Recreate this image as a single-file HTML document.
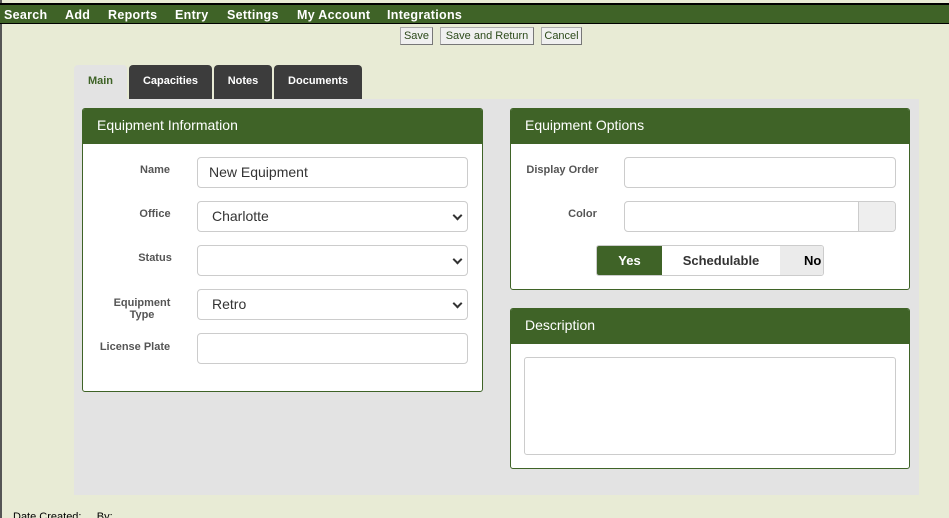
<!DOCTYPE html>
<html><head><style>
*{box-sizing:border-box}
html,body{margin:0;width:949px;height:518px;overflow:hidden}
body{background:#e8ebd5;font-family:"Liberation Sans",Arial,sans-serif;position:relative}
.a{position:absolute}
.nav{left:0;top:3px;width:949px;height:21px;background:#3f6327;border-top:2px solid #000;border-bottom:1px solid #000}
.nav span{position:absolute;top:3px;color:#fff;font-weight:bold;font-size:12.5px;font-family:"Liberation Sans",Arial,sans-serif;letter-spacing:0.3px}
.btn{top:27px;height:18px;background:#f0f0f0;border:1px solid #aaa;border-right-color:#777;border-bottom-color:#777;font-size:11px;color:#2c4a1a;text-align:center;line-height:16px}
.tab{top:65px;height:34px;background:#3c3c3c;color:#fff;font-weight:bold;font-size:11px;text-align:center;line-height:33px;border-radius:4px 4px 0 0}
.card{background:#fff;border:1px solid #3f6327;border-radius:3px;overflow:hidden}
.hd{height:35px;background:#3f6327;color:#fff;font-size:14px;line-height:33px;padding-left:14px}
.lbl{font-size:11px;font-weight:bold;color:#555;text-align:center;line-height:12px}
.inp{height:31px;border:1px solid #ccc;border-radius:4px;background:#fff;font-size:14px;color:#333;padding-left:11px;line-height:29px}
.sel:after{content:"";position:absolute;right:6px;top:10px;width:5px;height:5px;border-right:2px solid #333;border-bottom:2px solid #333;transform:rotate(45deg)}
</style></head><body>
<div class="a" style="left:0;top:0;width:2px;height:518px;background:#555"></div>
<div class="a nav">
<span style="left:4px">Search</span><span style="left:65px">Add</span><span style="left:108px">Reports</span><span style="left:175px">Entry</span><span style="left:227px">Settings</span><span style="left:297px">My Account</span><span style="left:387px">Integrations</span>
</div>
<div class="a btn" style="left:400px;width:33px">Save</div>
<div class="a btn" style="left:440px;width:94px">Save and Return</div>
<div class="a btn" style="left:541px;width:41px">Cancel</div>
<div class="a" style="left:74px;top:99px;width:845px;height:396px;background:#e3e3e3"></div>
<div class="a tab" style="left:74px;width:53px;background:#e3e3e3;color:#3f6327">Main</div>
<div class="a tab" style="left:129px;width:83px">Capacities</div>
<div class="a tab" style="left:214px;width:58px">Notes</div>
<div class="a tab" style="left:274px;width:88px">Documents</div>

<div class="a card" style="left:82px;top:108px;width:401px;height:284px"><div class="hd">Equipment Information</div></div>
<div class="a lbl" style="left:90px;top:164px;width:130px">Name</div>
<div class="a inp" style="left:197px;top:157px;width:271px">New Equipment</div>
<div class="a lbl" style="left:90px;top:208px;width:130px">Office</div>
<div class="a inp sel" style="left:197px;top:201px;width:271px;padding-left:14px">Charlotte</div>
<div class="a lbl" style="left:90px;top:252px;width:130px">Status</div>
<div class="a lbl" style="left:107px;top:297px;width:70px">Equipment Type</div>
<div class="a inp sel" style="left:197px;top:245px;width:271px"></div>
<div class="a inp sel" style="left:197px;top:289px;width:271px;padding-left:14px">Retro</div>
<div class="a lbl" style="left:90px;top:341px;width:90px">License Plate</div>
<div class="a inp" style="left:197px;top:333px;width:271px"></div>

<div class="a card" style="left:510px;top:108px;width:400px;height:182px"><div class="hd">Equipment Options</div></div>
<div class="a lbl" style="left:515px;top:164px;width:95px">Display Order</div>
<div class="a lbl" style="left:535px;top:208px;width:95px">Color</div>
<div class="a inp" style="left:624px;top:157px;width:272px"></div>
<div class="a inp" style="left:624px;top:201px;width:272px;overflow:hidden"><div class="a" style="right:0;top:0;width:37px;height:29px;background:#eee;border-left:1px solid #ccc"></div></div>
<div class="a" style="left:596px;top:245px;width:228px;height:31px;border:1px solid #ccc;border-radius:3px;overflow:hidden;background:#fff;font-size:13px;font-weight:bold;line-height:29px">
<div class="a" style="left:0;top:0;width:65px;height:29px;background:#3f6327;color:#fff;text-align:center">Yes</div>
<div class="a" style="left:65px;top:0;width:118px;text-align:center;color:#333">Schedulable</div>
<div class="a" style="left:183px;top:0;width:45px;height:29px;background:#ebebeb;color:#000;padding-left:24px">No</div>
</div>

<div class="a card" style="left:510px;top:308px;width:400px;height:161px"><div class="hd">Description</div></div>
<div class="a" style="left:524px;top:357px;width:372px;height:98px;border:1px solid #ccc;border-radius:3px;background:#fff"></div>

<div class="a" style="left:13px;top:511px;font-size:11px;color:#000">Date Created: &nbsp; &nbsp; By:</div>
</body></html>
